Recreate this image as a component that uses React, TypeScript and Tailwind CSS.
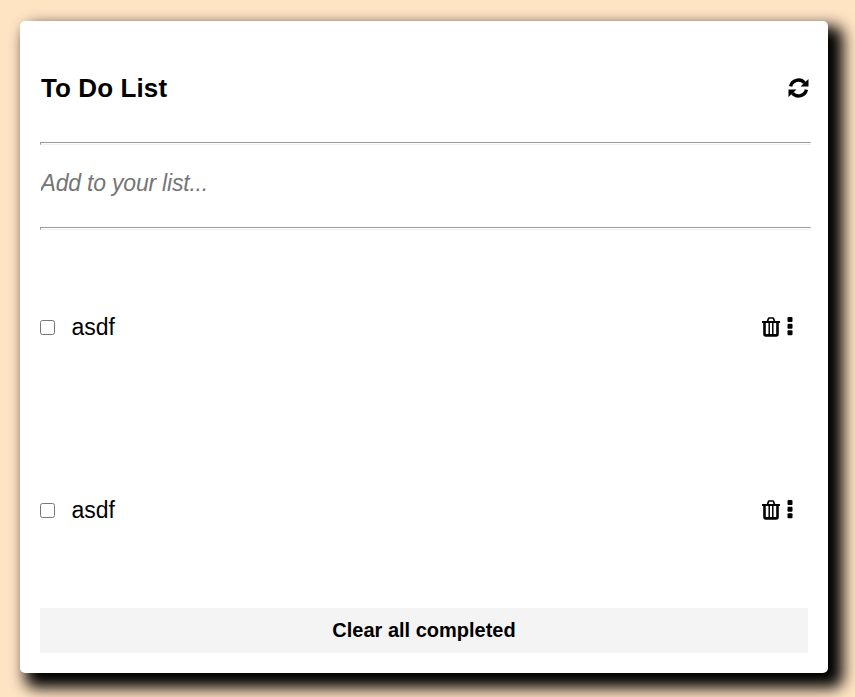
import React from 'react';

function Refresh() {
  return (
    <svg width="21" height="20" viewBox="0 0 21 20">
      <g fill="none" stroke="#000" strokeWidth="3.400">
        <path d="M2.600 8.300A8 7.800 0 0 1 16.500 4.800" />
        <path d="M18.400 11.700A8 7.800 0 0 1 4.500 15.200" />
      </g>
      <path d="M20.500 1v7.500h-8zM.5 19v-7.500h8z" />
    </svg>
  );
}

function Trash() {
  return (
    <svg width="18" height="20" viewBox="0 0 18 20" fill="none" stroke="#000">
      <path strokeWidth="1.700" d="M5.500 4.500L6.300 1.900q.3-.9 1-.9h3.400q.7 0 1 .9l.8 2.600" />
      <path strokeWidth="2" d="M0 5h18" />
      <path strokeWidth="2.600" d="M2.500 5v12q0 1.400 1.400 1.400h10.200q1.400 0 1.400-1.400V5" />
      <path strokeWidth="1.500" d="M7.200 5v12M10.800 5v12" />
    </svg>
  );
}

function Dots() {
  return (
    <svg width="6" height="20" viewBox="0 0 6 20">
      <rect x="0.500" y="0" width="5" height="5" rx="1" />
      <rect x="0.500" y="6.700" width="5" height="5" rx="1" />
      <rect x="0.500" y="13.300" width="5" height="5" rx="1" />
    </svg>
  );
}

function Item({ text }: { text: string }) {
  return (
    <li className="flex h-[183px] items-center pr-[18px]">
      <input type="checkbox" className="m-0 mt-px size-[15px]" />
      <span className="ml-[16.5px] grow text-[23px] leading-7">{text}</span>
      <Trash />
      <span className="ml-[7px]"><Dots /></span>
    </li>
  );
}

export default function App() {
  return (
    <main className="h-[697px] overflow-hidden bg-[#ffe4c4] pt-[21px] pl-5 font-['Liberation_Sans',Arial,sans-serif] text-black">
      <section className="h-[652px] w-[808px] rounded-[5px] bg-white pt-[47px] pl-5 shadow-[10px_10px_15px_5px_#000]">
        <header className="flex h-10 w-[771px] items-center justify-between pr-[2px] pl-px">
          <h1 className="text-[26px] font-bold tracking-[0.1px]">To Do List</h1>
          <Refresh />
        </header>
        <hr className="mt-[34px] h-[3px] w-[771px] border border-[#9a9a9a] border-r-[#eee] border-b-[#eee]" />
        <input placeholder="Add to your list..." className="block h-[82px] w-[771px] pb-[6px] pl-[0.5px] text-[23px] tracking-[-0.2px] italic placeholder:text-[#757575]" />
        <hr className="h-[3px] w-[771px] border border-[#9a9a9a] border-r-[#eee] border-b-[#eee]" />
        <ul className="mt-[5px] w-[771px]">
          <Item text="asdf" />
          <Item text="asdf" />
        </ul>
        <button className="mt-[7px] block h-[45px] w-[768px] bg-[#f4f4f4] pb-px text-[20px] font-bold">Clear all completed</button>
      </section>
    </main>
  );
}
